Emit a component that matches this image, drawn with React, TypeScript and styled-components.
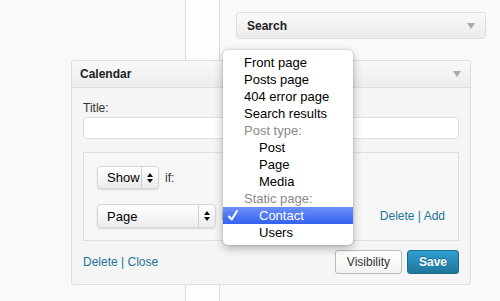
import React from 'react';
import styled, { createGlobalStyle } from 'styled-components';

const GlobalStyle = createGlobalStyle`
  html, body {
    margin: 0;
    padding: 0;
    background: #f9f9f9;
  }
  body {
    font-family: "Liberation Sans", Arial, sans-serif;
    color: #333;
  }
`;

const Page = styled.div`
  position: relative;
  display: flex;
  width: 500px;
  height: 301px;
  overflow: hidden;
  background: #f9f9f9;
`;
const LeftColumn = styled.div`
  width: 185px;
  border-right: 1px solid #dcdcdc;
`;
const GapColumn = styled.div`
  width: 33px;
  background: #fdfdfd;
  border-right: 1px solid #dcdcdc;
`;
const Sidebar = styled.div`
  flex: 1;
  padding: 12px 0 0 16px;
`;
const WidgetHeader = styled.div`
  display: flex;
  align-items: center;
  justify-content: space-between;
  height: 26px;
  padding: 0 9px 0 8px;
  background: linear-gradient(to bottom, #f9f9f9, #ececec);
  font-size: 12px;
  font-weight: bold;
  color: #222;
`;
const CollapsedWidget = styled.div`
  width: 250px;
  box-sizing: border-box;
  border: 1px solid #dfdfdf;
  border-radius: 3px;
  overflow: hidden;

  ${WidgetHeader} {
    height: 25px;
    padding: 0 10px;
  }
`;
const Arrow = styled.span`
  width: 0;
  height: 0;
  border-left: 4px solid transparent;
  border-right: 4px solid transparent;
  border-top: 6px solid #aaa;
`;
const OpenWidget = styled.div`
  position: absolute;
  left: 71px;
  top: 60px;
  width: 400px;
  box-sizing: border-box;
  border: 1px solid #dfdfdf;
  border-radius: 3px;
  background: #f5f5f5;
  overflow: hidden;

  ${WidgetHeader} {
    border-bottom: 1px solid #dfdfdf;
  }
`;
const WidgetBody = styled.div`
  padding: 12px 11px 10px;
`;
const Label = styled.label`
  display: block;
  font-size: 12px;
  line-height: 16px;
  margin-bottom: 1px;
  color: #333;
`;
const TextInput = styled.div`
  height: 22px;
  box-sizing: border-box;
  border: 1px solid #dfdfdf;
  border-radius: 3px;
  background: #fff;
`;
const ConditionBox = styled.div`
  margin-top: 13px;
  border: 1px solid #dfdfdf;
  padding: 13px 13px 12px;
  background: #f7f7f7;
`;
const Row = styled.div<{ $spaced?: boolean }>`
  display: flex;
  align-items: center;
  margin-top: ${p => (p.$spaced ? '15px' : '0')};
  font-size: 12px;
`;
const Select = styled.div<{ $width: number; $height: number }>`
  display: flex;
  width: ${p => p.$width}px;
  height: ${p => p.$height}px;
  box-sizing: border-box;
  border: 1px solid #d6d6d6;
  border-radius: 4px;
  background: linear-gradient(to bottom, #ffffff, #ececec);
  box-shadow: 0 1px 2px rgba(0, 0, 0, 0.12);
  font-size: 13px;
  color: #000;
`;
const SelectText = styled.span`
  flex: 1;
  display: flex;
  align-items: center;
  padding-left: 9px;
`;
const SelectArrows = styled.span`
  display: flex;
  align-items: center;
  justify-content: center;
  width: 16px;
  border-left: 1px solid #d0d0d0;
`;
const Word = styled.span`
  margin-left: 6px;
  color: #333;
`;
const Spacer = styled.span`
  flex: 1;
`;
const Links = styled.span`
  font-size: 12px;
  color: #21759b;
`;
const Footer = styled.div`
  display: flex;
  align-items: center;
  justify-content: space-between;
  margin-top: 9px;
`;
const Buttons = styled.div`
  display: flex;
  gap: 5px;
`;
const Button = styled.button<{ $primary?: boolean }>`
  height: 24px;
  padding: 0 11px;
  border-radius: 3px;
  font-family: inherit;
  font-size: 12px;
  font-weight: ${p => (p.$primary ? 'bold' : 'normal')};
  color: ${p => (p.$primary ? '#fff' : '#333')};
  border: 1px solid ${p => (p.$primary ? '#1e6a8d' : '#bbb')};
  background: ${p =>
    p.$primary
      ? 'linear-gradient(to bottom, #2e9fd2, #21759b)'
      : 'linear-gradient(to bottom, #ffffff, #f3f3f3)'};
  text-shadow: ${p => (p.$primary ? '0 -1px 0 rgba(0,0,0,0.3)' : 'none')};
`;
const Menu = styled.div`
  position: absolute;
  left: 223px;
  top: 50px;
  width: 130px;
  padding: 4px 0;
  background: #fff;
  border-radius: 5px;
  box-shadow: 0 3px 10px rgba(0, 0, 0, 0.3), 0 0 0 1px rgba(0, 0, 0, 0.06);
  font-size: 13px;
`;
const Option = styled.div<{ $indent?: boolean; $group?: boolean; $selected?: boolean }>`
  display: flex;
  align-items: center;
  height: 17px;
  line-height: 17px;
  padding-left: ${p => (p.$indent ? 36 : 21)}px;
  color: ${p => (p.$selected ? '#fff' : p.$group ? '#8a8a8a' : '#000')};
  background: ${p =>
    p.$selected ? 'linear-gradient(to bottom, #6b8ff8, #3462f1)' : 'transparent'};
`;
const Check = styled.svg`
  margin-left: -31px;
  margin-right: 21px;
  flex-shrink: 0;
`;

const UpDown = () => (
  <svg width="6" height="10" viewBox="0 0 6 10">
    <path d="M3 0 L6 4 L0 4 Z M0 6 L6 6 L3 10 Z" fill="#111" />
  </svg>
);

const App = () => (
  <>
    <GlobalStyle />
    <Page>
      <LeftColumn />
      <GapColumn />
      <Sidebar>
        <CollapsedWidget>
          <WidgetHeader>
            Search
            <Arrow />
          </WidgetHeader>
        </CollapsedWidget>
      </Sidebar>

      <OpenWidget>
        <WidgetHeader>
          Calendar
          <Arrow />
        </WidgetHeader>
        <WidgetBody>
          <Label>Title:</Label>
          <TextInput />
          <ConditionBox>
            <Row>
              <Select $width={62} $height={23}>
                <SelectText>Show</SelectText>
                <SelectArrows><UpDown /></SelectArrows>
              </Select>
              <Word>if:</Word>
            </Row>
            <Row $spaced>
              <Select $width={119} $height={24}>
                <SelectText>Page</SelectText>
                <SelectArrows><UpDown /></SelectArrows>
              </Select>
              <Word>is</Word>
              <Spacer />
              <Links>Delete | Add</Links>
            </Row>
          </ConditionBox>
          <Footer>
            <Links>Delete | Close</Links>
            <Buttons>
              <Button>Visibility</Button>
              <Button $primary>Save</Button>
            </Buttons>
          </Footer>
        </WidgetBody>
      </OpenWidget>

      <Menu>
        <Option>Front page</Option>
        <Option>Posts page</Option>
        <Option>404 error page</Option>
        <Option>Search results</Option>
        <Option $group>Post type:</Option>
        <Option $indent>Post</Option>
        <Option $indent>Page</Option>
        <Option $indent>Media</Option>
        <Option $group>Static page:</Option>
        <Option $indent $selected>
          <Check width="10" height="11" viewBox="0 0 10 11">
            <path d="M1 6.5 L3.8 9.5 L9 1" stroke="#fff" strokeWidth="2" fill="none" strokeLinecap="round" strokeLinejoin="round" />
          </Check>
          Contact
        </Option>
        <Option $indent>Users</Option>
      </Menu>
    </Page>
  </>
);

export default App;
